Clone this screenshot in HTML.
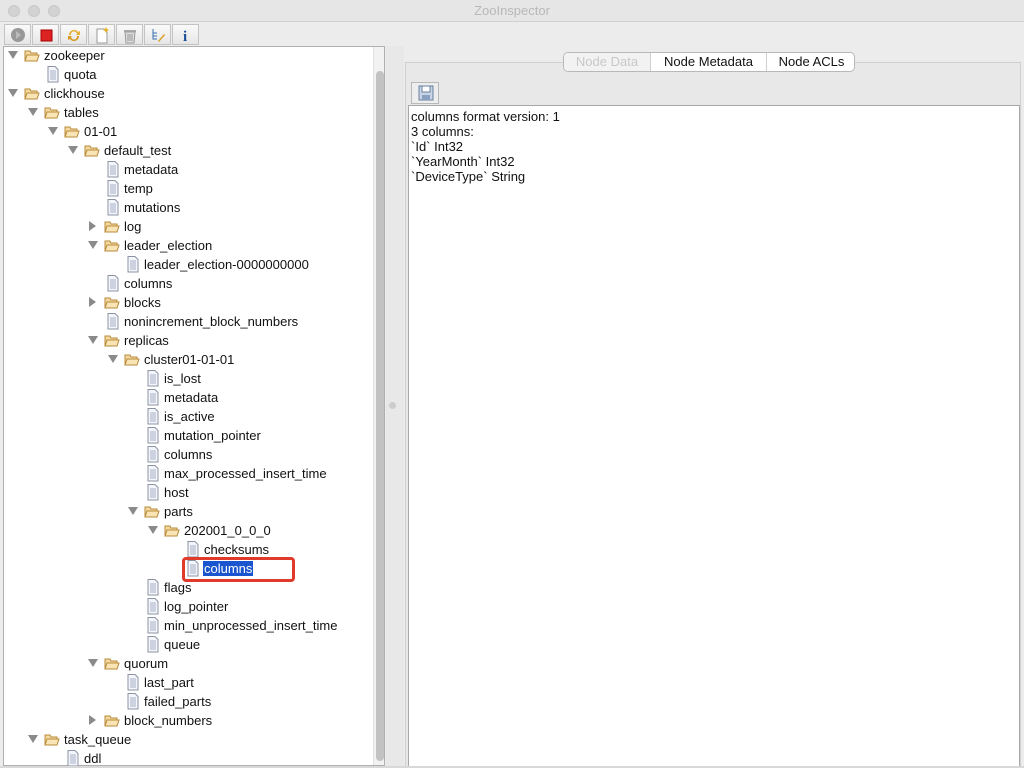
<!DOCTYPE html>
<html><head><meta charset="utf-8">
<style>
*{margin:0;padding:0;box-sizing:border-box}
body{width:1024px;height:768px;background:#ececec;font-family:"Liberation Sans",sans-serif;font-size:13px;color:#111;position:relative;overflow:hidden}
.abs{position:absolute}
#title{left:0;top:0;width:1024px;height:22px;background:#e6e6e6;border-bottom:1px solid #d0d0d0;text-align:center;line-height:22px;color:#b8b8b8;font-size:13px}
.dot{top:5px;width:12px;height:12px;border-radius:50%;background:#d3d3d3;border:1px solid #c8c8c8}
.btn{top:24px;height:21px;width:27px;border:1px solid #c4c4c4;background:linear-gradient(#fafafa,#e6e6e6)}
.btn svg{position:absolute;left:5px;top:2px}
#left{left:3px;top:46px;width:382px;height:720px;background:#fff;border:1px solid #b0b0b0;overflow:hidden}
.row{position:absolute;height:19px;line-height:19px;white-space:nowrap}
.row svg{position:absolute}
#sb{left:369px;top:0;width:13px;height:720px;background:#f2f2f2;border-left:1px solid #e2e2e2}
#thumb{left:372px;top:24px;width:8px;height:690px;background:#c2c2c2;border-radius:4px}
#right{left:405px;top:62px;width:616px;height:705px;background:#e8e8e8;border:1px solid #d0d0d0;border-bottom:none}
#tabs{left:563px;top:52px;width:292px;height:20px;border:1px solid #b8b8b8;border-radius:5px;background:#fff;overflow:hidden}
.tab{position:absolute;top:0;height:18px;line-height:18px;text-align:center;border-left:1px solid #d0d0d0}
#ta{left:408px;top:105px;width:612px;height:662px;background:#fff;border:1px solid #a8a8a8;padding:3px 2px;line-height:15px;font-size:13px}
</style></head><body>
<div id="title" class="abs">ZooInspector</div>
<div class="abs dot" style="left:8px"></div>
<div class="abs dot" style="left:28px"></div>
<div class="abs dot" style="left:48px"></div>

<div class="abs btn" style="left:4px"><svg width="16" height="16"><circle cx="8" cy="8" r="7" fill="#999"/><path d="M6 4l5 4-5 4z" fill="#bbb"/></svg></div>
<div class="abs btn" style="left:32px"><svg width="16" height="16"><rect x="3" y="3" width="11" height="11" fill="#d22" stroke="#a00"/></svg></div>
<div class="abs btn" style="left:60px"><svg width="16" height="16"><path d="M3 8a5 5 0 0 1 9-3l2-1v4h-4l1-1a3 3 0 0 0-6 1z" fill="#e6b33a"/><path d="M13 9a5 5 0 0 1-9 3l-2 1V9h4l-1 1a3 3 0 0 0 6-1z" fill="#d89a20"/></svg></div>
<div class="abs btn" style="left:88px"><svg width="16" height="17"><path d="M3 2h7l3 3v11H3z" fill="#fff" stroke="#999"/><path d="M12 0l1 2 2 1-2 1-1 2-1-2-2-1 2-1z" fill="#e8b020"/></svg></div>
<div class="abs btn" style="left:116px"><svg width="16" height="17"><rect x="2" y="3" width="12" height="2" fill="#aaa"/><path d="M3 5h10l-1 11H4z" fill="#ddd" stroke="#999"/><path d="M6 7v7M8 7v7M10 7v7" stroke="#999"/></svg></div>
<div class="abs btn" style="left:144px"><svg width="16" height="16"><path d="M3 2v10h4M3 6h4M3 9h4" stroke="#3a6fb0" fill="none"/><path d="M8 14l6-7 1 1-6 7z" fill="#d8a020"/></svg></div>
<div class="abs btn" style="left:172px"><svg width="16" height="16"><text x="5" y="14" font-family="Liberation Serif" font-weight="bold" font-size="15" fill="#1a4f9a">i</text></svg></div>

<div id="left" class="abs">
<svg width="0" height="0" style="position:absolute"><defs>
<g id="fo"><path d="M1 3h5l1 2h6v8H1z" fill="#f3d9a0" stroke="#b88a3a"/><path d="M1 13l2-6h12l-2 6z" fill="#f8e4b4" stroke="#b88a3a"/></g>
<g id="fi"><path d="M2 0.5h7l3 3v12.5H2z" fill="#f4f6fb" stroke="#8b93a3"/><path d="M4 5h6M4 7h6M4 9h6M4 11h6M4 13h6" stroke="#a4aec4"/></g>
<g id="ad"><path d="M0 0h10l-5 8z" fill="#8a8a8a"/></g>
<g id="ar"><path d="M0 0l7 5-7 5z" fill="#8a8a8a"/></g>
</defs></svg>
<div id="sb" class="abs"></div><div id="thumb" class="abs"></div>
</div>

<div id="right" class="abs"></div>
<div id="tabs" class="abs">
<div class="tab" style="left:0;width:86px;border:none;background:#f2f2f2;color:#c8c8c8">Node Data</div>
<div class="tab" style="left:86px;width:116px">Node Metadata</div>
<div class="tab" style="left:202px;width:90px">Node ACLs</div>
</div>
<div class="abs" style="left:411px;top:82px;width:28px;height:22px;border:1px solid #b8b8b8;background:#eee"><svg width="16" height="16" style="position:absolute;left:6px;top:2px"><rect x="1" y="1" width="14" height="14" fill="#c8d4e4" stroke="#6880a0"/><rect x="4" y="1" width="8" height="6" fill="#fff" stroke="#6880a0"/><rect x="4" y="10" width="8" height="5" fill="#8aa0c0"/></svg></div>
<div id="ta" class="abs">columns format version: 1<br>3 columns:<br>`Id` Int32<br>`YearMonth` Int32<br>`DeviceType` String</div>

<div class="abs" style="left:386px;top:46px;width:18px;height:720px;background:#e8e8e8"></div>
<div class="abs" style="left:389px;top:402px;width:7px;height:7px;border-radius:50%;background:#ccc"></div>

<div id="tree">
<!-- rows: top = 46 + 19*i ; positioned relative to body -->
<div class="abs row" style="left:0;top:46px"><svg style="left:8px;top:5px" width="10" height="9"><use href="#ad"/></svg><svg style="left:24px;top:2px" width="16" height="15"><use href="#fo"/></svg><span class="abs" style="left:44px">zookeeper</span></div>
<div class="abs row" style="left:0;top:65px"><svg style="left:46px;top:1px" width="14" height="17"><use href="#fi"/></svg><span class="abs" style="left:64px">quota</span></div>
<div class="abs row" style="left:0;top:84px"><svg style="left:8px;top:5px" width="10" height="9"><use href="#ad"/></svg><svg style="left:24px;top:2px" width="16" height="15"><use href="#fo"/></svg><span class="abs" style="left:44px">clickhouse</span></div>
<div class="abs row" style="left:0;top:103px"><svg style="left:28px;top:5px" width="10" height="9"><use href="#ad"/></svg><svg style="left:44px;top:2px" width="16" height="15"><use href="#fo"/></svg><span class="abs" style="left:64px">tables</span></div>
<div class="abs row" style="left:0;top:122px"><svg style="left:48px;top:5px" width="10" height="9"><use href="#ad"/></svg><svg style="left:64px;top:2px" width="16" height="15"><use href="#fo"/></svg><span class="abs" style="left:84px">01-01</span></div>
<div class="abs row" style="left:0;top:141px"><svg style="left:68px;top:5px" width="10" height="9"><use href="#ad"/></svg><svg style="left:84px;top:2px" width="16" height="15"><use href="#fo"/></svg><span class="abs" style="left:104px">default_test</span></div>
<div class="abs row" style="left:0;top:160px"><svg style="left:106px;top:1px" width="14" height="17"><use href="#fi"/></svg><span class="abs" style="left:124px">metadata</span></div>
<div class="abs row" style="left:0;top:179px"><svg style="left:106px;top:1px" width="14" height="17"><use href="#fi"/></svg><span class="abs" style="left:124px">temp</span></div>
<div class="abs row" style="left:0;top:198px"><svg style="left:106px;top:1px" width="14" height="17"><use href="#fi"/></svg><span class="abs" style="left:124px">mutations</span></div>
<div class="abs row" style="left:0;top:217px"><svg style="left:89px;top:4px" width="8" height="11"><use href="#ar"/></svg><svg style="left:104px;top:2px" width="16" height="15"><use href="#fo"/></svg><span class="abs" style="left:124px">log</span></div>
<div class="abs row" style="left:0;top:236px"><svg style="left:88px;top:5px" width="10" height="9"><use href="#ad"/></svg><svg style="left:104px;top:2px" width="16" height="15"><use href="#fo"/></svg><span class="abs" style="left:124px">leader_election</span></div>
<div class="abs row" style="left:0;top:255px"><svg style="left:126px;top:1px" width="14" height="17"><use href="#fi"/></svg><span class="abs" style="left:144px">leader_election-0000000000</span></div>
<div class="abs row" style="left:0;top:274px"><svg style="left:106px;top:1px" width="14" height="17"><use href="#fi"/></svg><span class="abs" style="left:124px">columns</span></div>
<div class="abs row" style="left:0;top:293px"><svg style="left:89px;top:4px" width="8" height="11"><use href="#ar"/></svg><svg style="left:104px;top:2px" width="16" height="15"><use href="#fo"/></svg><span class="abs" style="left:124px">blocks</span></div>
<div class="abs row" style="left:0;top:312px"><svg style="left:106px;top:1px" width="14" height="17"><use href="#fi"/></svg><span class="abs" style="left:124px">nonincrement_block_numbers</span></div>
<div class="abs row" style="left:0;top:331px"><svg style="left:88px;top:5px" width="10" height="9"><use href="#ad"/></svg><svg style="left:104px;top:2px" width="16" height="15"><use href="#fo"/></svg><span class="abs" style="left:124px">replicas</span></div>
<div class="abs row" style="left:0;top:350px"><svg style="left:108px;top:5px" width="10" height="9"><use href="#ad"/></svg><svg style="left:124px;top:2px" width="16" height="15"><use href="#fo"/></svg><span class="abs" style="left:144px">cluster01-01-01</span></div>
<div class="abs row" style="left:0;top:369px"><svg style="left:146px;top:1px" width="14" height="17"><use href="#fi"/></svg><span class="abs" style="left:164px">is_lost</span></div>
<div class="abs row" style="left:0;top:388px"><svg style="left:146px;top:1px" width="14" height="17"><use href="#fi"/></svg><span class="abs" style="left:164px">metadata</span></div>
<div class="abs row" style="left:0;top:407px"><svg style="left:146px;top:1px" width="14" height="17"><use href="#fi"/></svg><span class="abs" style="left:164px">is_active</span></div>
<div class="abs row" style="left:0;top:426px"><svg style="left:146px;top:1px" width="14" height="17"><use href="#fi"/></svg><span class="abs" style="left:164px">mutation_pointer</span></div>
<div class="abs row" style="left:0;top:445px"><svg style="left:146px;top:1px" width="14" height="17"><use href="#fi"/></svg><span class="abs" style="left:164px">columns</span></div>
<div class="abs row" style="left:0;top:464px"><svg style="left:146px;top:1px" width="14" height="17"><use href="#fi"/></svg><span class="abs" style="left:164px">max_processed_insert_time</span></div>
<div class="abs row" style="left:0;top:483px"><svg style="left:146px;top:1px" width="14" height="17"><use href="#fi"/></svg><span class="abs" style="left:164px">host</span></div>
<div class="abs row" style="left:0;top:502px"><svg style="left:128px;top:5px" width="10" height="9"><use href="#ad"/></svg><svg style="left:144px;top:2px" width="16" height="15"><use href="#fo"/></svg><span class="abs" style="left:164px">parts</span></div>
<div class="abs row" style="left:0;top:521px"><svg style="left:148px;top:5px" width="10" height="9"><use href="#ad"/></svg><svg style="left:164px;top:2px" width="16" height="15"><use href="#fo"/></svg><span class="abs" style="left:184px">202001_0_0_0</span></div>
<div class="abs row" style="left:0;top:540px"><svg style="left:186px;top:1px" width="14" height="17"><use href="#fi"/></svg><span class="abs" style="left:204px">checksums</span></div>
<div class="abs row" style="left:0;top:559px"><svg style="left:186px;top:1px" width="14" height="17"><use href="#fi"/></svg><span class="abs" style="left:203px;top:2px;height:15px;line-height:15px;background:#1a55d0;color:#fff;padding:0 1px">columns</span></div>
<div class="abs" style="left:182px;top:557px;width:113px;height:25px;border:3px solid #e03a2a;border-radius:4px"></div>
<div class="abs row" style="left:0;top:578px"><svg style="left:146px;top:1px" width="14" height="17"><use href="#fi"/></svg><span class="abs" style="left:164px">flags</span></div>
<div class="abs row" style="left:0;top:597px"><svg style="left:146px;top:1px" width="14" height="17"><use href="#fi"/></svg><span class="abs" style="left:164px">log_pointer</span></div>
<div class="abs row" style="left:0;top:616px"><svg style="left:146px;top:1px" width="14" height="17"><use href="#fi"/></svg><span class="abs" style="left:164px">min_unprocessed_insert_time</span></div>
<div class="abs row" style="left:0;top:635px"><svg style="left:146px;top:1px" width="14" height="17"><use href="#fi"/></svg><span class="abs" style="left:164px">queue</span></div>
<div class="abs row" style="left:0;top:654px"><svg style="left:88px;top:5px" width="10" height="9"><use href="#ad"/></svg><svg style="left:104px;top:2px" width="16" height="15"><use href="#fo"/></svg><span class="abs" style="left:124px">quorum</span></div>
<div class="abs row" style="left:0;top:673px"><svg style="left:126px;top:1px" width="14" height="17"><use href="#fi"/></svg><span class="abs" style="left:144px">last_part</span></div>
<div class="abs row" style="left:0;top:692px"><svg style="left:126px;top:1px" width="14" height="17"><use href="#fi"/></svg><span class="abs" style="left:144px">failed_parts</span></div>
<div class="abs row" style="left:0;top:711px"><svg style="left:89px;top:4px" width="8" height="11"><use href="#ar"/></svg><svg style="left:104px;top:2px" width="16" height="15"><use href="#fo"/></svg><span class="abs" style="left:124px">block_numbers</span></div>
<div class="abs row" style="left:0;top:730px"><svg style="left:28px;top:5px" width="10" height="9"><use href="#ad"/></svg><svg style="left:44px;top:2px" width="16" height="15"><use href="#fo"/></svg><span class="abs" style="left:64px">task_queue</span></div>
<div class="abs row" style="left:0;top:749px"><svg style="left:66px;top:1px" width="14" height="17"><use href="#fi"/></svg><span class="abs" style="left:84px">ddl</span></div>
</div>
<div class="abs" style="left:0;top:766px;width:1024px;height:2px;background:#d8d8d8"></div>
</body></html>
